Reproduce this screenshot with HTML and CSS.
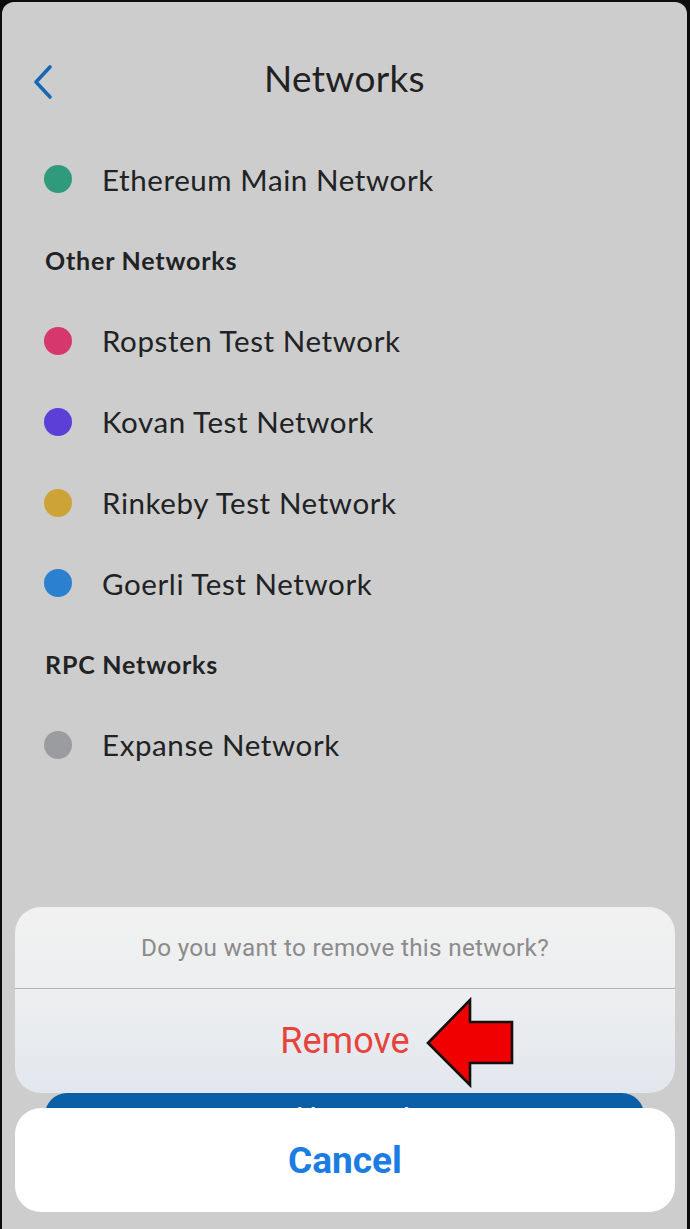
FILE: index.html
```html
<!DOCTYPE html>
<html lang="en">
<head>
    <meta charset="UTF-8">
    <meta name="viewport" content="width=device-width, initial-scale=1.0">
    <title>Networks</title>
    <link rel="stylesheet" href="styles.css">
</head>
<body>
    <div class="screen">
        <header class="nav">
            <button class="back" aria-label="Back">
                <svg width="22" height="36" viewBox="0 0 22 36"><path d="M18 3 L4 18 L18 33" fill="none" stroke="#1767b3" stroke-width="3.6" stroke-linecap="round" stroke-linejoin="round"/></svg>
            </button>
            <h1>Networks</h1>
        </header>

        <ul class="network-list">
            <li class="network"><span class="dot mainnet"></span>Ethereum Main Network</li>
            <li class="section-title">Other Networks</li>
            <li class="network"><span class="dot ropsten"></span>Ropsten Test Network</li>
            <li class="network"><span class="dot kovan"></span>Kovan Test Network</li>
            <li class="network"><span class="dot rinkeby"></span>Rinkeby Test Network</li>
            <li class="network"><span class="dot goerli"></span>Goerli Test Network</li>
            <li class="section-title">RPC Networks</li>
            <li class="network"><span class="dot rpc"></span>Expanse Network</li>
        </ul>

        <div class="footer">
            <button class="add-btn">Add Network</button>
        </div>

        <div class="action-sheet">
            <div class="sheet-group">
                <p class="sheet-message">Do you want to remove this network?</p>
                <button class="sheet-btn destructive">Remove</button>
            </div>
            <button class="sheet-btn cancel">Cancel</button>
            <svg class="pointer" width="96" height="96" viewBox="424 996 96 96">
                <polygon points="428,1043 470,1000 470,1022 512,1022 512,1063 470,1063 470,1085" fill="#f00000" stroke="#111" stroke-width="2.6" stroke-linejoin="miter"/>
            </svg>
        </div>
    </div>
</body>
</html>
```

FILE: styles.css
```css
* { margin: 0; padding: 0; box-sizing: border-box; }
html, body { height: 100%; }
body { background-color: #0d0d0d; font-family: Lato, "Noto Sans", sans-serif; color: #202224; overflow: hidden; }
button { font-family: inherit; border: none; background: none; cursor: pointer; }

.screen { position: relative; display: flex; flex-direction: column; height: 1227px; margin: 2px 3px 0 2px; background-color: #cdcdcd; border-radius: 12px 12px 0 0; overflow: hidden; }

.nav { position: relative; display: flex; align-items: center; justify-content: center; height: 60px; margin-top: 45px; }
.nav h1 { font-size: 37px; font-weight: 400; letter-spacing: 0.3px; color: #1f2123; }
.back { position: absolute; left: 30px; top: 17px; display: flex; }

.network-list { list-style: none; margin-top: 32px; }
.network { display: flex; align-items: center; height: 80.8px; padding-left: 42px; font-size: 29.5px; letter-spacing: 0.6px; }
.section-title { display: flex; align-items: center; height: 80.8px; padding-left: 43px; font-size: 25px; font-weight: 700; letter-spacing: 0.8px; }
.dot { width: 28px; height: 28px; border-radius: 50%; margin-right: 30px; flex-shrink: 0; }
.mainnet { background-color: #309b7c; }
.ropsten { background-color: #d6386d; }
.kovan { background-color: #5b3fd7; }
.rinkeby { background-color: #cda236; }
.goerli { background-color: #2b80cf; }
.rpc { background-color: #9b9c9f; }

.footer { margin-top: auto; padding: 0 43px 92px; }
.add-btn { width: 100%; height: 44px; border-radius: 30px; background-color: #0a5fa7; color: #f2f2f2; font-size: 24px; font-weight: 700; padding-top: 2px; }

.action-sheet { position: absolute; left: 13px; right: 12px; bottom: 17px; display: flex; flex-direction: column; gap: 15px; font-family: Roboto, "Liberation Sans", sans-serif; }
.sheet-group { border-radius: 26px; overflow: hidden; background: linear-gradient(#f1f1f1 0%, #eceef0 50%, #e2e7ee 100%); }
.sheet-message { height: 82px; display: flex; align-items: center; justify-content: center; font-size: 24.3px; color: #8b8b8b; border-bottom: 1px solid #b3b3b3; letter-spacing: 0.3px; }
.sheet-btn { display: flex; align-items: center; justify-content: center; width: 100%; height: 104px; font-size: 36px; }
.destructive { color: #e8433b; }
.cancel { background-color: #ffffff; border-radius: 26px; color: #1b7ce4; font-weight: 700; font-size: 37px; }
.pointer { position: absolute; left: 409px; top: 89px; }
```
